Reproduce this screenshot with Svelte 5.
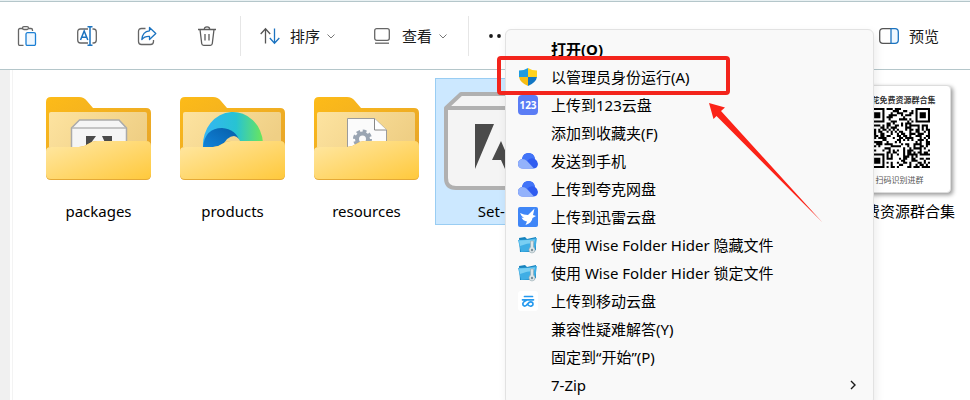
<script lang="ts">
	type Kind = 'box' | 'edge' | 'gear'

	const folders: { name: string; kind: Kind }[] = [
		{ name: 'packages', kind: 'box' },
		{ name: 'products', kind: 'edge' },
		{ name: 'resources', kind: 'gear' },
	]

	const menuItems = [
		{ label: '打开(O)', icon: '', bold: true },
		{ label: '以管理员身份运行(A)', icon: 'shield' },
		{ label: '上传到123云盘', icon: '123' },
		{ label: '添加到收藏夹(F)', icon: '' },
		{ label: '发送到手机', icon: 'cloud' },
		{ label: '上传到夸克网盘', icon: 'cloud' },
		{ label: '上传到迅雷云盘', icon: 'bird' },
		{ label: '使用 Wise Folder Hider 隐藏文件', icon: 'locker' },
		{ label: '使用 Wise Folder Hider 锁定文件', icon: 'locker' },
		{ label: '上传到移动云盘', icon: 'yun' },
		{ label: '兼容性疑难解答(Y)', icon: '' },
		{ label: '固定到“开始”(P)', icon: '' },
		{ label: '7-Zip', icon: '', submenu: true },
	]

	const QR_SIZE = 29

	function inFinder(x: number, y: number) {
		return (x < 8 && y < 8) || (x > QR_SIZE - 9 && y < 8) || (x < 8 && y > QR_SIZE - 9)
	}

	function buildQrPath() {
		let seed = 77
		let path = ''
		for (let y = 0; y < QR_SIZE; y++) {
			for (let x = 0; x < QR_SIZE; x++) {
				seed = (seed * 1103515245 + 12345) % 2147483648
				if (!inFinder(x, y) && seed / 2147483648 > 0.47) {
					path += `M${x} ${y}h1v1h-1z`
				}
			}
		}
		return path
	}

	const qrPath = buildQrPath()
	const finders = [
		[0, 0],
		[QR_SIZE - 7, 0],
		[0, QR_SIZE - 7],
	]
</script>

{#snippet chevron()}
	<svg class="chevron" viewBox="0 0 8 8" width="8" height="8" aria-hidden="true">
		<path d="M.5 2.500L4 6L7.500 2.500" fill="none" stroke="#777" />
	</svg>
{/snippet}

<div class="window">
	<header class="toolbar">
		<div class="icon-buttons">
			<button aria-label="粘贴">
				<svg viewBox="0 0 20 20" width="20" height="20" fill="none" stroke-width="1.3">
					<path d="M6 2.500H3Q1.500 2.500 1.500 4V18Q1.500 19.500 3 19.500H6.500M12 2.500H14Q15.500 2.500 15.500 4V5" stroke="#666" />
					<rect x="5.500" y="0.700" width="6" height="2.800" rx="1.400" stroke="#666" />
					<rect x="9" y="6.700" width="9.500" height="12.800" rx="1.500" fill="#eef7ff" stroke="#1b7fd4" />
				</svg>
			</button>
			<button aria-label="重命名">
				<svg viewBox="0 0 20 20" width="20" height="20" fill="none" stroke-width="1.3">
					<path d="M11 3H3.500Q.7 3 .7 6V14Q.7 17 3.500 17H11M15.500 3H16.500Q19.300 3 19.300 6V14Q19.300 17 16.500 17H15.500" stroke="#666" />
					<path d="M3.500 14L7.200 5L10.800 14M4.700 11.200H9.700M13 1V19M10.500 .8H15.500M10.500 19.200H15.500" stroke="#1b73c0" stroke-width="1.500" />
				</svg>
			</button>
			<button aria-label="共享">
				<svg viewBox="0 0 20 20" width="20" height="20" fill="none" stroke-width="1.3" stroke-linejoin="round">
					<path d="M8.500 2.500H4.500Q1.500 2.500 1.500 5.500V15.500Q1.500 18.500 4.500 18.500H13.500Q16.500 18.500 16.500 15.500V14" stroke="#666" />
					<path d="M12.500 1.500L18.800 7.500L12.500 13.500V10.300Q7.500 10 4.800 13.500Q5.500 5.500 12.500 4.800Z" stroke="#1b73c0" />
				</svg>
			</button>
			<button aria-label="删除">
				<svg viewBox="0 0 20 20" width="20" height="20" fill="none" stroke="#5c5c5c" stroke-width="1.3">
					<path d="M1 3.500H19M7.300 3.300Q7.300 .8 10 .8Q12.700 .8 12.700 3.300M3 3.500L4.700 17.500Q4.900 19.300 6.700 19.300H13.300Q15.100 19.300 15.300 17.500L17 3.500M8 8V14.500M12 8V14.500" />
				</svg>
			</button>
		</div>
		<span class="divider"></span>
		<div class="drop-buttons">
			<button class="text-button">
				<svg viewBox="0 0 20 20" width="20" height="20" fill="none" stroke-width="1.3">
					<path d="M5.500 17.500V3M.7 8L5.500 2.700L10.200 8" stroke="#555" />
					<path d="M14.500 2.500V17M9.800 12L14.500 17.200L19.300 12" stroke="#1b73c0" />
				</svg>
				排序
				{@render chevron()}
			</button>
			<button class="text-button">
				<svg viewBox="0 0 20 20" width="20" height="20" fill="none" stroke="#666" stroke-width="1.3">
					<rect x="2.700" y="2.700" width="14.600" height="11.600" rx="2" />
					<path d="M3 17.200H17" />
				</svg>
				查看
				{@render chevron()}
			</button>
		</div>
		<span class="divider"></span>
		<button class="more" aria-label="查看更多">
			<svg viewBox="0 0 20 4" width="20" height="4" fill="#1a1a1a">
				<circle cx="2" cy="2" r="1.900" />
				<circle cx="10" cy="2" r="1.900" />
				<circle cx="18" cy="2" r="1.900" />
			</svg>
		</button>
		<button class="text-button preview">
			<svg viewBox="0 0 20 20" width="20" height="20" fill="none" stroke-width="1.3">
				<path d="M12 2.700H4Q.7 2.700 .7 6V14Q.7 17.300 4 17.300H12" stroke="#555" />
				<path d="M12 2.700H16Q19.300 2.700 19.300 6V14Q19.300 17.300 16 17.300H12Z" fill="#eef7ff" stroke="#1b73c0" />
			</svg>
			预览
		</button>
	</header>

	<main class="content">
		<aside class="rail"></aside>
		<div class="files">
			{#each folders as folder (folder.name)}
				<button class="tile">
					<span class="thumb">
						<svg viewBox="0 0 105 84" width="105" height="84" aria-hidden="true">
							<defs>
								<linearGradient id="back-{folder.kind}" x1="0" y1="0" x2="1" y2="1">
									<stop offset="0" stop-color="#fdbb18" />
									<stop offset="1" stop-color="#e6a42b" />
								</linearGradient>
								<linearGradient id="inner-{folder.kind}" x1="0" y1="0" x2="1" y2="0.4">
									<stop offset="0" stop-color="#fde3a0" />
									<stop offset="1" stop-color="#efcf85" />
								</linearGradient>
								<linearGradient id="front-{folder.kind}" x1="0" y1="0" x2="1" y2="1">
									<stop offset="0" stop-color="#ffe8a6" />
									<stop offset="1" stop-color="#ffc93c" />
								</linearGradient>
								<linearGradient id="wave-{folder.kind}" x1="0" y1="0" x2="1" y2="0">
									<stop offset="0" stop-color="#35b5f5" />
									<stop offset="0.55" stop-color="#27c3d3" />
									<stop offset="1" stop-color="#6be65a" />
								</linearGradient>
								<linearGradient id="deep-{folder.kind}" x1="0" y1="1" x2="1" y2="0">
									<stop offset="0" stop-color="#1187df" />
									<stop offset="1" stop-color="#075ca6" />
								</linearGradient>
							</defs>
							<path d="M0 5Q0 0 5 0H33Q38 0 41 4L47 11H100Q105 11 105 16V60H0Z" fill="url(#back-{folder.kind})" />
							<path d="M3 17Q3 15 5 15H99Q101 15 101 17V60H3Z" fill="url(#inner-{folder.kind})" />
							{#if folder.kind === 'box'}
								<path d="M25.500 31L33.500 23H73L80.500 31V60H25.500Z" fill="#f5f5f5" stroke="#aaa" stroke-width="1.500" />
								<path d="M26 31H80" stroke="#b5b5b5" stroke-width="1.500" />
								<path d="M40 39H50L42 50H40ZM56 39H66V50H61Z" fill="#4a4a4a" />
							{:else if folder.kind === 'edge'}
								<path d="M23 50A30 33 0 0 1 83 46V60H23Z" fill="url(#wave-{folder.kind})" />
								<path d="M23 50Q25 31 42 31Q56 32 60 45L42 54H23Z" fill="url(#deep-{folder.kind})" />
								<path d="M42 50Q47 39 54 39Q59 40 61 46Z" fill="#f3d690" />
							{:else}
								<path d="M33.500 21.500H60.500L72.500 33V60H33.500Z" fill="#fbfbfb" stroke="#9b9b9b" />
								<path d="M60.500 21.500V33H72.500" fill="#fff" stroke="#888" />
								<circle cx="48.500" cy="42" r="5.500" fill="none" stroke="#9aa5b2" stroke-width="4" />
								<circle cx="48.500" cy="42" r="8" fill="none" stroke="#9aa5b2" stroke-width="3" stroke-dasharray="3.700 2.583" />
							{/if}
							<path d="M0 54Q0 50 5 50H33Q38 50 42 47Q46 44 51 44H100Q105 44 105 49V78Q105 83 100 83H5Q0 83 0 78Z" fill="#e5a936" />
							<path d="M0 54Q0 50 5 50H33Q38 50 42 47Q46 44 51 44H100Q105 44 105 49V77Q105 82 100 82H5Q0 82 0 77Z" fill="url(#front-{folder.kind})" />
						</svg>
					</span>
					<span class="name">{folder.name}</span>
				</button>
			{/each}
			<button class="tile selected">
				<span class="thumb">
					<svg viewBox="0 -4 114 102" width="114" height="102" aria-hidden="true">
						<path d="M2 16L17 2H97L112 16V86Q112 96 102 96H12Q2 96 2 86Z" fill="#f4f4f4" stroke="#b0b0b0" stroke-width="4" stroke-linejoin="round" />
						<path d="M2 16H112" stroke="#b0b0b0" stroke-width="4" />
						<path d="M31 32H50L31 77ZM83 32H64L83 77ZM57 49L69 77H61L57 68H48Z" fill="#4a4a4a" />
					</svg>
				</span>
				<span class="name">Set-up</span>
			</button>
			<button class="tile last">
				<span class="thumb">
					<span class="card">
						<span class="card-title">花免费资源群合集</span>
						<svg viewBox="0 0 29 29" width="60" height="60" aria-hidden="true">
							<path d={qrPath} />
							{#each finders as [x, y]}
								<path d="M{x} {y}h7v7h-7zm1 1v5h5v-5zm1 1h3v3h-3z" fill-rule="evenodd" />
							{/each}
						</svg>
						<span class="card-note">扫码识别进群</span>
					</span>
				</span>
				<span class="name">免费资源群合集</span>
			</button>
		</div>
	</main>

	<div class="menu" role="menu">
		{#each menuItems as item}
			<button class="menu-item" class:bold={item.bold} role="menuitem">
				<svg viewBox="0 0 20 20" width="20" height="20" aria-hidden="true">
					{#if item.icon === 'shield'}
						<path d="M10 1Q6 3.500 1 3.500V10H10Z" fill="#1e9be0" />
						<path d="M10 1Q14 3.500 19 3.500V10H10Z" fill="#ffd21f" />
						<path d="M1 10H10V19Q2 15.500 1 10Z" fill="#f7bd13" />
						<path d="M19 10H10V19Q18 15.500 19 10Z" fill="#1277c4" />
					{:else if item.icon === '123'}
						<rect width="20" height="20" rx="4" fill="#5b7df5" />
						<text x="10" y="14" text-anchor="middle" class="badge-text">123</text>
					{:else if item.icon === 'cloud'}
						<path d="M5 17.500Q0 17.500 0 12.500Q0 9 4 8Q5 2 10.500 2Q16 2 17 8Q20 10 20 13Q19.500 17.500 15 17.500Z" fill="#2f5cf0" />
						<path d="M4 8Q5 2 10.500 2Q16 2 17 8Q12 6 9 10Z" fill="#4274f8" />
						<path d="M5 17.500Q0 17.500 0 12.500Q0 8.500 4.500 8Q7 8 9 10L16 17.500Z" fill="#93b2fb" />
					{:else if item.icon === 'bird'}
						<rect width="20" height="20" rx="2" fill="#3f86f7" />
						<path d="M2 6Q6 8 10 8L16.500 1.500L15 8L18 9L14.500 11Q14 16 7.500 18L9 14.500Q5 14 3.500 10.500L6 11Q3 9 2 6Z" fill="#fff" />
					{:else if item.icon === 'locker'}
						<path d="M1 3L7 2L9 4L18 2V15L13 17H2Z" fill="#1682bd" />
						<path d="M0 5L11 4.500L19 3L17 16L3 17Z" fill="#3faee5" />
						<path d="M1 5.500L17 4.500L16 8Q9 8 2 11Z" fill="#79cff3" />
						<path d="M12.500 6H15.500V12Q18 14 16.500 17Q14 19 11.500 17Q10 14 12.500 12Z" fill="#dde5e8" stroke="#92a6ae" stroke-width=".6" />
						<circle cx="14" cy="15" r="1.200" fill="#7b9099" />
					{:else if item.icon === 'yun'}
						<rect width="20" height="20" rx="3" fill="#fff" />
						<path d="M6.500 5.500H14.500M4.500 8.800H15.500M9 9Q4 11 5 14Q7 16.500 9.500 13Q12 10 14.500 11.500Q16 14.500 13 15.200Q10.500 15.500 9.500 13" fill="none" stroke="#2599ee" stroke-width="1.700" stroke-linecap="round" />
					{/if}
				</svg>
				<span class="menu-label">{item.label}</span>
				{#if item.submenu}
					<svg class="submenu" viewBox="0 0 8 12" width="8" height="12" aria-hidden="true">
						<path d="M2 2L6 6L2 10" fill="none" stroke="#1a1a1a" stroke-width="1.400" />
					</svg>
				{/if}
			</button>
		{/each}
	</div>

	<div class="highlight"></div>
	<svg class="arrow" viewBox="0 0 114 120" width="114" height="120" aria-hidden="true">
		<path d="M0 0L16 4.500L12 8L113.500 119.500L7.500 13L4.500 16Z" fill="#fb2318" />
	</svg>
</div>

<style>
	:global(body) {
		margin: 0;
	}

	.window {
		position: relative;
		display: flex;
		flex-direction: column;
		height: 100vh;
		overflow: hidden;
		background: #fff;
		color: #1a1a1a;
		font-family: 'Noto Sans', 'Noto Sans CJK SC', sans-serif;
		font-size: 15px;
	}

	button {
		display: flex;
		align-items: center;
		margin: 0;
		padding: 0;
		border: 0;
		background: none;
		color: inherit;
		font: inherit;
	}

	svg {
		flex: none;
	}

	.toolbar {
		display: flex;
		align-items: center;
		box-sizing: border-box;
		height: 70px;
		padding: 2px 31px 0 7px;
		border-top: 1px solid #e9f1f3;
		border-bottom: 1px solid #b4c6ca;
		box-shadow: inset 0 1px #b4c6ca;
	}

	.icon-buttons {
		display: flex;
		gap: 20px;
		margin-right: 13px;
	}

	.icon-buttons button {
		justify-content: center;
		width: 40px;
		height: 40px;
	}

	.divider {
		width: 1px;
		height: 40px;
		background: #e6e6e6;
	}

	.drop-buttons {
		display: flex;
		gap: 37px;
		margin: 0 21px 0 19px;
	}

	.text-button {
		gap: 10px;
		line-height: 24px;
		white-space: nowrap;
	}

	.chevron {
		margin-left: -3px;
	}

	.more {
		margin-left: 20px;
	}

	.preview {
		margin-left: auto;
	}

	.content {
		display: flex;
		flex: 1;
	}

	.rail {
		box-sizing: border-box;
		width: 10px;
		margin-right: 2px;
		background: #f0f0f0;
	}

	.files {
		display: grid;
		flex: 1;
		grid-template-columns: repeat(7, 131px);
		gap: 3px;
		align-content: start;
		padding: 8px 0 0 20px;
		border-left: 1px solid #f3f3f3;
	}

	.tile {
		flex-direction: column;
		border: 1px solid transparent;
		color: #000;
	}

	.tile.selected {
		border-color: #99cdf3;
		background: #cce8ff;
	}

	.tile.last {
		grid-column: 7;
	}

	.thumb {
		display: flex;
		align-items: center;
		justify-content: center;
		height: 120px;
	}

	.name {
		height: 25px;
		line-height: 25px;
		white-space: nowrap;
	}

	.card {
		display: flex;
		flex-direction: column;
		align-items: center;
		box-sizing: border-box;
		width: 96px;
		height: 108px;
		padding: 6px 6px 0 0;
		border: 1px solid #ddd;
		border-radius: 4px;
		background: #fff;
		box-shadow: 2px 2px 4px #999;
		font-size: 8px;
	}

	.card-title {
		align-self: flex-end;
		padding-right: 8px;
		color: #333;
		font-weight: 700;
		line-height: 16px;
		white-space: nowrap;
	}

	.card-note {
		color: #555;
		line-height: 24px;
	}

	.menu {
		position: absolute;
		top: 29px;
		left: 505px;
		box-sizing: border-box;
		width: 369px;
		padding: 5px 0;
		border: 1px solid #e2e2e2;
		border-radius: 6px;
		background: #f9f9f9;
		box-shadow: 2px 4px 10px rgba(0, 0, 0, 0.08);
		color: #000;
	}

	.menu-item {
		gap: 13px;
		width: 100%;
		height: 28px;
		padding: 0 16px 0 12px;
		line-height: 28px;
		text-align: left;
		white-space: nowrap;
	}

	.menu-item.bold {
		font-weight: 700;
	}

	.menu-label {
		flex: 1;
	}

	.badge-text {
		fill: #fff;
		font-size: 10px;
		font-weight: 700;
	}

	.highlight {
		position: absolute;
		top: 56px;
		left: 497px;
		box-sizing: border-box;
		width: 233px;
		height: 39px;
		border: 4px solid #f3241c;
		border-radius: 4px;
	}

	.arrow {
		position: absolute;
		top: 103px;
		left: 709px;
	}
</style>
